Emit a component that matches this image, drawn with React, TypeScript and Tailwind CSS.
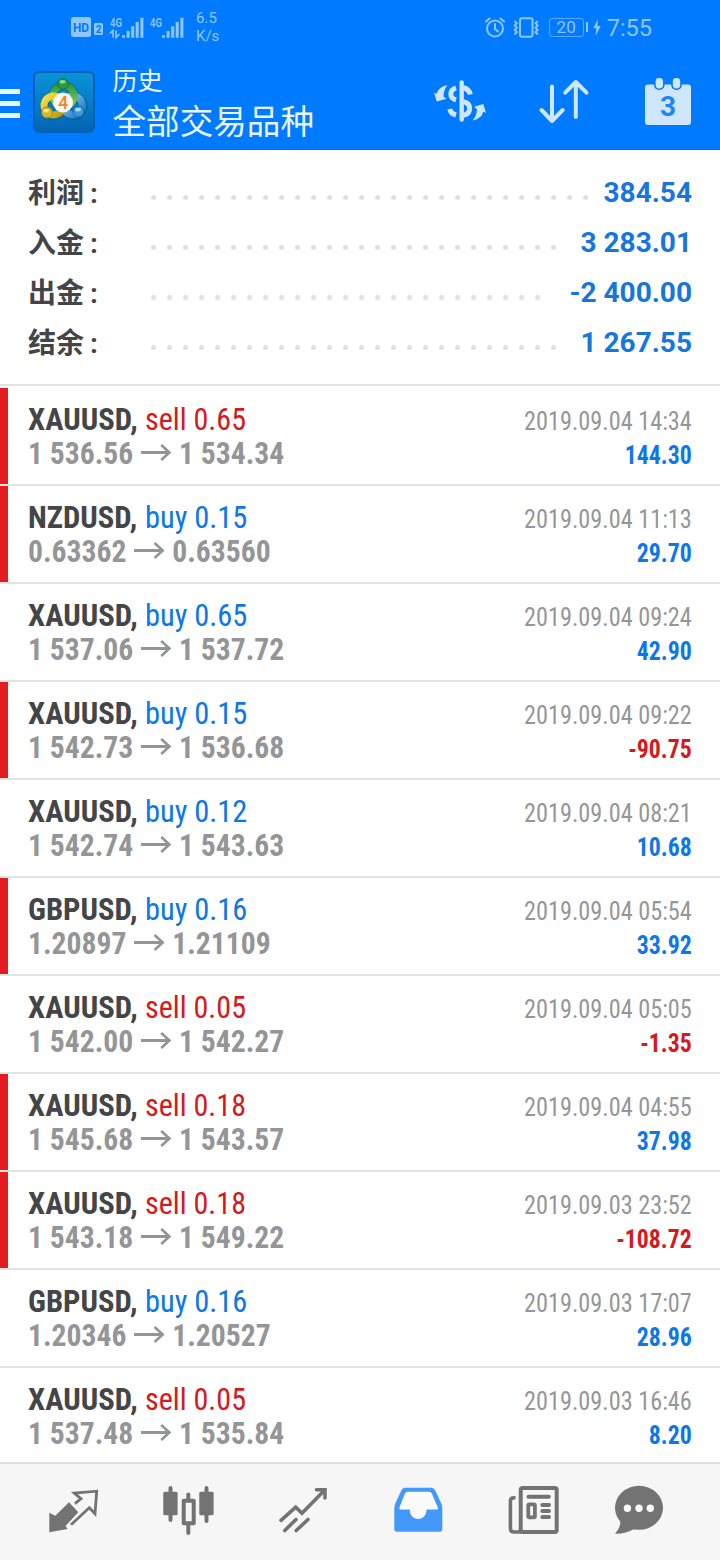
import React from 'react';

interface Deal {
  symbol: string;
  side: 'buy' | 'sell';
  volume: string;
  open: string;
  close: string;
  time: string;
  profit: string;
  marked?: boolean;
}

const SUMMARY = [
  { label: '利润', value: '384.54', dots: 28 },
  { label: '入金', value: '3 283.01', dots: 26 },
  { label: '出金', value: '-2 400.00', dots: 25 },
  { label: '结余', value: '1 267.55', dots: 26 },
];

const DEALS: Deal[] = [
  { symbol: 'XAUUSD', side: 'sell', volume: '0.65', open: '1 536.56', close: '1 534.34', time: '2019.09.04 14:34', profit: '144.30', marked: true },
  { symbol: 'NZDUSD', side: 'buy', volume: '0.15', open: '0.63362', close: '0.63560', time: '2019.09.04 11:13', profit: '29.70', marked: true },
  { symbol: 'XAUUSD', side: 'buy', volume: '0.65', open: '1 537.06', close: '1 537.72', time: '2019.09.04 09:24', profit: '42.90' },
  { symbol: 'XAUUSD', side: 'buy', volume: '0.15', open: '1 542.73', close: '1 536.68', time: '2019.09.04 09:22', profit: '-90.75', marked: true },
  { symbol: 'XAUUSD', side: 'buy', volume: '0.12', open: '1 542.74', close: '1 543.63', time: '2019.09.04 08:21', profit: '10.68' },
  { symbol: 'GBPUSD', side: 'buy', volume: '0.16', open: '1.20897', close: '1.21109', time: '2019.09.04 05:54', profit: '33.92', marked: true },
  { symbol: 'XAUUSD', side: 'sell', volume: '0.05', open: '1 542.00', close: '1 542.27', time: '2019.09.04 05:05', profit: '-1.35' },
  { symbol: 'XAUUSD', side: 'sell', volume: '0.18', open: '1 545.68', close: '1 543.57', time: '2019.09.04 04:55', profit: '37.98', marked: true },
  { symbol: 'XAUUSD', side: 'sell', volume: '0.18', open: '1 543.18', close: '1 549.22', time: '2019.09.03 23:52', profit: '-108.72', marked: true },
  { symbol: 'GBPUSD', side: 'buy', volume: '0.16', open: '1.20346', close: '1.20527', time: '2019.09.03 17:07', profit: '28.96' },
  { symbol: 'XAUUSD', side: 'sell', volume: '0.05', open: '1 537.48', close: '1 535.84', time: '2019.09.03 16:46', profit: '8.20' },
];

const Signal: React.FC<{ data?: boolean }> = ({ data }) => (
  <svg className="overflow-visible" width="34" height="21" viewBox="0 0 34 21" fill="currentColor">
    <text x="0" y="10" fontSize="12.5" fontWeight="600" textLength="12" lengthAdjust="spacingAndGlyphs">4G</text>
    {data && <path d="M0 16.5 3 13.5V20.5M6 13.5V20.5L9.5 17" fill="none" stroke="currentColor" strokeWidth="1.7" />}
    <path d="M12 18.3h3v2.4h-3zM16.6 14h3v6.7h-3zM21.2 9.3h3v11.4h-3zM25.7 5h3v15.7h-3zM30.4.7h3v20h-3z" />
  </svg>
);

const StatusBar: React.FC = () => (
  <div className="flex h-[54px] items-center justify-between pr-[68px] pl-[71px] text-[#8fc6ff]">
    <div className="flex items-center">
      <svg width="33" height="20" viewBox="0 0 33 20" fill="currentColor">
        <rect width="20" height="20" rx="2.5" />
        <text x="2" y="14.5" fontSize="12.5" fontWeight="700" fill="#007aff" textLength="16" lengthAdjust="spacingAndGlyphs">HD</text>
        <rect x="23" y="6" width="9" height="12" rx="1.5" />
        <text x="24.7" y="15.6" fontSize="10" fontWeight="700" fill="#007aff">2</text>
      </svg>
      <div className="ml-[6px]"><Signal data /></div>
      <div className="ml-[6px]"><Signal /></div>
      <div className="ml-3 text-[15px] leading-[18px]">
        <div>6.5</div>
        <div>K/s</div>
      </div>
    </div>
    <div className="flex items-center">
      <svg width="20" height="21" viewBox="0 0 20 21" fill="none" stroke="currentColor" strokeWidth="2" strokeLinecap="round">
        <circle cx="10" cy="11.5" r="8" />
        <path d="M10 7v5l3 2.5M1 4.5 4.5 1.5M19 4.5 15.5 1.5" />
      </svg>
      <svg className="ml-2" width="27" height="21" viewBox="0 0 27 21" fill="none" stroke="currentColor" strokeWidth="2">
        <rect x="7" y="1.2" width="12.5" height="18.6" rx="2" />
        <path d="M1.5 4 3.8 6 1.8 8.5l2 2.2-2 2.3 2 2.2L1.5 17.5M24.8 4l-2.2 2 2 2.5-2 2.2 2 2.3-2 2.2 2.2 2.3" />
      </svg>
      <div className="ml-[9px] flex h-[19px] w-[35px] items-center justify-center rounded-[3px] border border-[#5cabff] text-[17px] leading-none">20</div>
      <div className="ml-[2px] h-[10px] w-[2px] bg-[#8fc6ff]"></div>
      <svg className="ml-[5px]" width="8" height="17" viewBox="0 0 8 17" fill="currentColor">
        <path d="M4.8 0 .3 9.2h3L2.6 17 7.7 7H4.5z" />
      </svg>
      <span className="ml-[6px] pt-[3px] text-[23.5px] leading-none">7:55</span>
    </div>
  </div>
);

const AppIcon: React.FC = () => (
  <svg width="62" height="62" viewBox="0 0 62 62">
    <defs>
      <linearGradient id="tile" x1="0" y1="0" x2="0" y2="1">
        <stop offset="0" stopColor="#0a93d6" />
        <stop offset=".6" stopColor="#0479c6" />
        <stop offset="1" stopColor="#0363b0" />
      </linearGradient>
      <linearGradient id="green" x1="0" y1="0" x2="0" y2="1">
        <stop offset="0" stopColor="#2f9a42" />
        <stop offset="1" stopColor="#8bcb62" />
      </linearGradient>
      <linearGradient id="gold" x1="0" y1="0" x2="1" y2="1">
        <stop offset="0" stopColor="#f4e04e" />
        <stop offset="1" stopColor="#b59a10" />
      </linearGradient>
      <linearGradient id="sky" x1="0" y1="0" x2="1" y2="1">
        <stop offset="0" stopColor="#8fd0f2" />
        <stop offset="1" stopColor="#1d78c4" />
      </linearGradient>
    </defs>
    <rect x="1" y="1" width="60" height="60" rx="5" fill="url(#tile)" stroke="#0561b8" strokeWidth="2" />
    <g fill="none" strokeWidth="9" stroke="#0a5a86" opacity=".55">
      <circle cx="30.5" cy="25" r="10.5" />
      <circle cx="20.5" cy="35" r="9.5" />
      <circle cx="40.5" cy="35" r="9.5" />
    </g>
    <g fill="none" strokeWidth="7">
      <circle cx="40" cy="34.5" r="9.5" stroke="url(#sky)" />
      <circle cx="30.5" cy="25" r="10.5" stroke="url(#green)" />
      <circle cx="20.5" cy="34.5" r="9.5" stroke="url(#gold)" />
    </g>
    <circle cx="30" cy="13" r="5.3" fill="#2c9b40" stroke="#136c33" strokeWidth=".8" />
    <ellipse cx="29.5" cy="10.8" rx="3" ry="1.8" fill="#8fdc8f" />
    <circle cx="14" cy="41.5" r="5.5" fill="#d5b82a" stroke="#8f7c12" strokeWidth=".8" />
    <ellipse cx="13" cy="39.6" rx="3" ry="1.8" fill="#f6e98c" />
    <circle cx="45.5" cy="40.5" r="5.5" fill="#3c96d8" stroke="#125c9c" strokeWidth=".8" />
    <ellipse cx="45" cy="38.6" rx="3" ry="1.8" fill="#a5dbf7" />
    <circle cx="30" cy="31.5" r="10" fill="#fbf8f3" />
    <text x="30" y="38" fontSize="18" fontWeight="500" textAnchor="middle" fill="#f08a24">4</text>
  </svg>
);

const Header: React.FC = () => (
  <header className="h-[150px] border-b border-[#0a6fdc] bg-[#007aff]">
    <StatusBar />
    <div className="flex h-[95px] items-start">
      <div className="mt-[35px] flex w-5 flex-col gap-[7px]">
        <div className="h-[5px] bg-[#e6f6ff]"></div>
        <div className="h-[5px] bg-[#e6f6ff]"></div>
        <div className="h-[5px] bg-[#e6f6ff]"></div>
      </div>
      <div className="mt-[17px] ml-[13px]"><AppIcon /></div>
      <div className="mt-[10px] ml-[17.5px] flex-1 text-[#e8f5ff]">
        <div className="text-[25px] leading-[36px]">历史</div>
        <div className="text-[33.6px] leading-[46px]">全部交易品种</div>
      </div>
      <svg className="mt-[26px]" width="56" height="42" viewBox="0 0 56 42" fill="none" stroke="#cfe6ff" strokeWidth="5">
        <path d="M29.7 2.5V39.5" strokeWidth="4.4" strokeLinecap="round" />
        <path d="M24 7.8Q18.8 9.5 18.8 14T24 20M31.5 7.8Q37 9 38.3 14.5M31.5 21.8Q37.6 23 37.6 28.5T31.5 35.3M17.8 29Q18.5 33.5 24 35" />
        <path d="M15.5 5Q6 7 4.7 14L2 12.5 4.7 21.5 14.5 18.7 11.5 16.5Q11.5 10 15.5 5ZM40.5 40.5Q50 38.5 51.3 31.5L54 33 51.3 24 42 26.7 45 29.2Q45 35 40.5 40.5Z" fill="#cfe6ff" stroke="none" />
      </svg>
      <svg className="mt-[24px] ml-[50px]" width="52" height="48" viewBox="0 0 52 48" fill="none" stroke="#cfe6ff" strokeWidth="4" strokeLinecap="round" strokeLinejoin="round">
        <path d="M14 8.5V43M3.5 32 14 43 24.7 32M37.8 39V4M27.2 14.7 37.8 4 48.5 14.7" />
      </svg>
      <svg className="mt-[22px] mr-[28px] ml-[54px]" width="48" height="50" viewBox="0 0 48 50">
        <rect x="1" y="8.5" width="46" height="40.5" rx="3" fill="#cfe6ff" />
        <rect x="10" y="0" width="10.6" height="14" rx="5" fill="#007aff" />
        <rect x="27.2" y="0" width="10.6" height="14" rx="5" fill="#007aff" />
        <rect x="11.6" y="2" width="7.4" height="10.4" rx="3.4" fill="#cfe6ff" />
        <rect x="28.8" y="2" width="7.4" height="10.4" rx="3.4" fill="#cfe6ff" />
        <text x="24" y="40" fontSize="28" fontWeight="700" textAnchor="middle" fill="#1f86f5">3</text>
      </svg>
    </div>
  </header>
);

const Arrow: React.FC = () => (
  <svg className="mx-2 inline-block align-[3px]" width="32" height="17" viewBox="0 0 32 17" fill="none" stroke="#949597" strokeWidth="2.8">
    <path d="M0 8.5H30M21.5 1 30 8.5 21.5 16" />
  </svg>
);

const DealRow: React.FC<{ deal: Deal }> = ({ deal }) => (
  <div className="flex h-[98px] border-b-2 border-[#e2e2e2] font-['Roboto_Condensed','Roboto',sans-serif] [font-stretch:75%]">
    <div className={deal.marked ? 'w-2 bg-[#e11d1f]' : 'w-2'}></div>
    <div className="flex-1 pt-[15px] pl-5 text-[31px] leading-[34px] whitespace-nowrap">
      <div className="flex">
        <span className="w-[116.5px] origin-left scale-x-[0.988] font-bold text-[#444547]">{deal.symbol},</span>
        <span className={deal.side === 'sell' ? 'origin-left scale-x-[0.97] text-[#d5191d]' : 'origin-left scale-x-[0.98] text-[#0c77e9]'}>
          {deal.side} {deal.volume}
        </span>
      </div>
      <div className="origin-left scale-x-[0.955] font-bold text-[#949597]">
        {deal.open}<Arrow />{deal.close}
      </div>
    </div>
    <div className="pt-4 pr-7 text-right text-[26px] leading-[34px] whitespace-nowrap">
      <div className="origin-right scale-x-[0.933] text-[#959697]">{deal.time}</div>
      <div className={deal.profit.startsWith('-') ? 'origin-right scale-x-[0.915] font-bold text-[#d5191d]' : 'origin-right scale-x-[0.915] font-bold text-[#0c77e9]'}>
        {deal.profit}
      </div>
    </div>
  </div>
);

const TabBar: React.FC = () => (
  <nav className="flex h-[98px] shrink-0 border-t-2 border-[#dedede] bg-[#f6f6f6] pl-4">
    {/* Quotes */}
    <svg width="115" height="96" viewBox="0 0 115 96" fill="none">
      <path d="M33.3 48.7V68.2L51.7 65 49.5 62 62.3 48.3 53 38.3 39.3 51.7Z" fill="#737373" />
      <path d="M55 60.7 73.3 43.7 79 49.7 80.7 27.2 58.3 29 65 34.7 59 39.7" stroke="#737373" strokeWidth="2.8" />
    </svg>
    {/* Chart */}
    <svg width="115" height="96" viewBox="0 0 115 96" fill="#737373">
      <rect x="32.3" y="27.7" width="14.3" height="23.6" rx="1.5" />
      <rect x="68.3" y="27.7" width="14.3" height="23.6" rx="1.5" />
      <path d="M39.5 24V56M57.3 30.5V36M57.3 60V69M75.5 24V57" stroke="#737373" strokeWidth="4" strokeLinecap="round" />
      <rect x="52.7" y="36.7" width="10" height="22.6" fill="#f6f6f6" stroke="#737373" strokeWidth="4" strokeLinejoin="round" />
    </svg>
    {/* Trade */}
    <svg width="115" height="96" viewBox="0 0 115 96" fill="none" stroke="#737373" strokeWidth="3.6" strokeLinecap="round">
      <path d="M35 56.3 49.7 43.2 56 49.3 78.5 26.3M70.5 25.7H79V34M38.8 66.5 50 55.5M50.2 66.5 62 55.5" />
    </svg>
    {/* History */}
    <svg width="115" height="96" viewBox="0 0 115 96">
      <path d="M44 23.7H70.5Q73 23.7 74.3 26.5L80.5 40Q81.3 42 81.3 44V65Q81.3 67.8 78.5 67.8H36Q33.3 67.8 33.3 65V44Q33.3 42 34.1 40L40.3 26.5Q41.5 23.7 44 23.7Z" fill="#4299fb" />
      <path d="M46.5 27.8H68.2Q70 27.8 70.8 29.6L76.6 43Q77.3 45.6 75.5 45.6H65.3V48A8.3 8.3 0 0 1 48.9 48V45.6H39.8Q38 45.6 38.6 43L44 29.6Q44.8 27.8 46.5 27.8Z" fill="#fbfbfb" />
    </svg>
    {/* News */}
    <svg width="115" height="96" viewBox="0 0 115 96" fill="none" stroke="#737373" strokeWidth="4">
      <rect x="44.7" y="24" width="36" height="44" rx="2" />
      <path d="M39.5 33.7H38Q34.4 33.7 34.4 37.3V64.3Q34.4 68 38 68H46" strokeWidth="3.6" />
      <path d="M52.5 32.8H72.8M66.3 41H73M66.3 47H73M66.3 53H73" strokeLinecap="round" />
      <rect x="52.3" y="40.3" width="6.6" height="13" rx="1" strokeWidth="3.8" />
    </svg>
    {/* Messages */}
    <svg width="115" height="96" viewBox="0 0 115 96" fill="#737373">
      <ellipse cx="48" cy="43.8" rx="24" ry="22" />
      <path d="M28 54Q32 60 24 69.8 35 70 43 65Z" />
      <g fill="#fafafa">
        <circle cx="36.4" cy="44.3" r="3.7" />
        <circle cx="48" cy="44.3" r="3.7" />
        <circle cx="59.3" cy="44.3" r="3.7" />
      </g>
    </svg>
  </nav>
);

const App: React.FC = () => {
  return (
    <div className="flex h-[1560px] w-[720px] flex-col overflow-hidden bg-white font-['Roboto','Noto_Sans_CJK_SC',sans-serif]">
      <Header />

      <section className="mb-[2px] h-[236px] border-b-2 border-[#e2e2e2] pt-[18px] pr-7 pl-7">
        {SUMMARY.map((item) => (
          <div key={item.label} className="flex h-[50px] items-center">
            <div className="flex w-[123px] pt-[2px] text-[28px] leading-[50px] font-bold text-[#444547]">
              <span>{item.label}</span>
              <span className="ml-[6px]">:</span>
            </div>
            <div className="flex flex-1 gap-[11px] pt-[9px]">
              {Array.from({ length: item.dots }, (_, i) => (
                <span key={i} className="h-[5px] w-[5px] shrink-0 rounded-full bg-[#e0e0e0]"></span>
              ))}
            </div>
            <span className="text-[28px] leading-[50px] font-bold text-[#1676de]">{item.value}</span>
          </div>
        ))}
      </section>

      <main className="h-[1074px] overflow-hidden">
        {DEALS.map((deal) => (
          <DealRow key={deal.time} deal={deal} />
        ))}
      </main>

      <TabBar />
    </div>
  );
};

export default App;
